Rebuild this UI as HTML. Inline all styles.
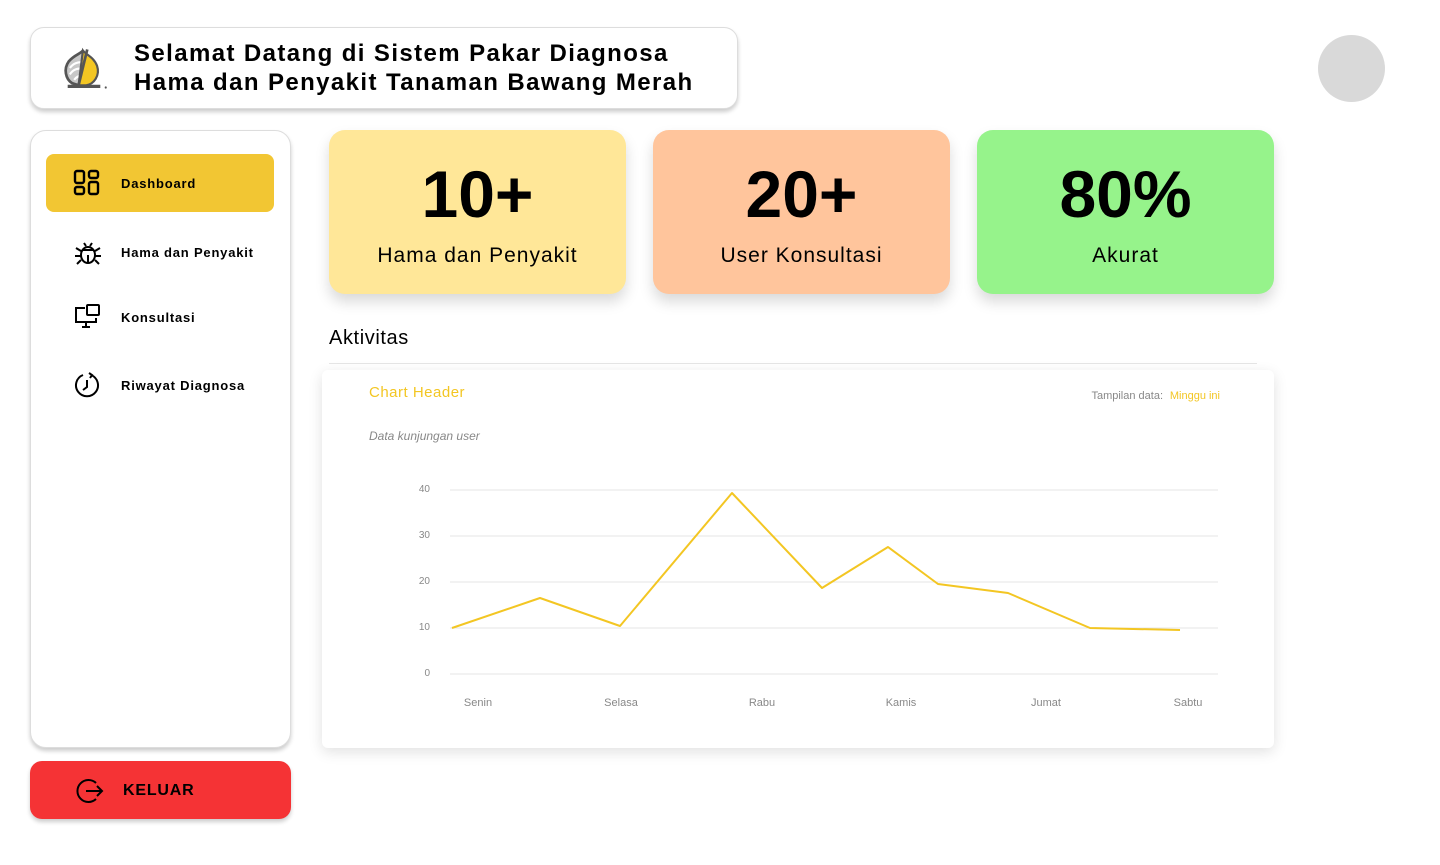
<!DOCTYPE html>
<html><head><meta charset="utf-8"><style>
*{box-sizing:border-box;margin:0;padding:0}
body{width:1440px;height:865px;background:#fff;font-family:"Liberation Sans",sans-serif;position:relative;overflow:hidden;color:#000}
.abs{position:absolute}
.header{left:30px;top:27px;width:708px;height:82px;border:1px solid #ddd;border-radius:14px;box-shadow:0 3px 4px rgba(0,0,0,.2);background:#fff}
.header h1{position:absolute;left:103px;top:11px;font-size:24px;line-height:29px;font-weight:bold;letter-spacing:1.4px;white-space:nowrap}
.side{left:30px;top:130px;width:261px;height:618px;border:1px solid #ddd;border-radius:16px;box-shadow:0 3px 4px rgba(0,0,0,.2);background:#fff}
.nav{position:absolute;left:15px;width:228px;height:58px;border-radius:8px;font-size:13px;font-weight:bold;display:flex;align-items:center;letter-spacing:.8px}
.nav svg{position:absolute;left:27px}
.nav span{position:absolute;left:75px}
.card{top:130px;width:297px;height:164px;border-radius:16px;box-shadow:0 8px 14px rgba(0,0,0,.15);text-align:center}
.card b{display:block;font-size:66px;margin-top:26px;line-height:76px}
.card span{display:block;font-size:21px;margin-top:12px;letter-spacing:1px}
.chart{left:322px;top:370px;width:952px;height:378px;background:#fff;border-radius:6px;box-shadow:0 4px 14px rgba(0,0,0,.12)}
.out{left:30px;top:761px;width:261px;height:58px;background:#f53335;border-radius:12px;box-shadow:0 3px 4px rgba(0,0,0,.2);font-weight:bold;font-size:16px;letter-spacing:.8px}
</style></head><body>
<div class="abs header">
<svg class="abs" style="left:28px;top:16px" width="50" height="50" viewBox="0 0 46 46">
<path d="M22 6c-2 3-8 4-13 10-5 7-3 16 3 20l6 2" fill="#c8c8c8" stroke="#555" stroke-width="2.5"/>
<path d="M10 22c3-4 8-6 12-5M10 28c3-5 8-6 12-5M14 33c2-3 5-4 8-4" fill="none" stroke="#fff" stroke-width="2"/>
<path d="M22 6c3 4 10 6 13 14 3 9-3 17-10 18l-7 0z" fill="#f3c623" stroke="#555" stroke-width="2"/>
<path d="M26 5l-8 33" stroke="#555" stroke-width="2.5"/>
<path d="M8 39h30" stroke="#555" stroke-width="3"/><circle cx="43" cy="40" r="1" fill="#555"/>
</svg>
<h1>Selamat Datang di Sistem Pakar Diagnosa<br>Hama dan Penyakit Tanaman Bawang Merah</h1>
</div>
<div class="abs" style="left:1318px;top:35px;width:67px;height:67px;border-radius:50%;background:#d9d9d9"></div>
<div class="abs side">
<div class="nav" style="top:23px;background:#f2c633">
<svg width="28" height="28" viewBox="0 0 28 28" fill="none" stroke="#000" stroke-width="2.4"><rect x="2" y="2" width="9" height="12" rx="2"/><rect x="16" y="2" width="9" height="7" rx="2"/><rect x="2" y="18" width="9" height="7" rx="2"/><rect x="16" y="13" width="9" height="12" rx="2"/></svg>
<span>Dashboard</span></div>
<div class="nav" style="top:92px">
<svg width="30" height="28" viewBox="0 0 30 28" fill="none" stroke="#000" stroke-width="2"><ellipse cx="15" cy="17" rx="7" ry="8"/><path d="M9 12h12M15 17v8M11 5l2 3M19 5l-2 3M3 10l5 3M27 10l-5 3M2 18h6M28 18h-6M4 26l4-4M26 26l-4-4"/></svg>
<span>Hama dan Penyakit</span></div>
<div class="nav" style="top:157px">
<svg width="30" height="28" viewBox="0 0 30 28" fill="none" stroke="#000" stroke-width="2"><path d="M12 5H3v14h20v-4M9 24h8M13 19v5"/><rect x="14" y="2" width="12" height="10" rx="1"/></svg>
<span>Konsultasi</span></div>
<div class="nav" style="top:225px">
<svg width="28" height="28" viewBox="0 0 28 28" fill="none" stroke="#000" stroke-width="2"><path d="M18 4a11 11 0 1 1-8 0"/><path d="M14 9v7l-4 3M16 2l3 2-2 3"/></svg>
<span>Riwayat Diagnosa</span></div>
</div>
<div class="abs card" style="left:329px;background:#ffe798"><b>10+</b><span>Hama dan Penyakit</span></div>
<div class="abs card" style="left:653px;background:#ffc59c"><b>20+</b><span>User Konsultasi</span></div>
<div class="abs card" style="left:977px;background:#96f38b"><b>80%</b><span>Akurat</span></div>
<div class="abs" style="left:329px;top:327px;font-size:20px;letter-spacing:.6px">Aktivitas</div>
<div class="abs" style="left:329px;top:363px;width:928px;height:1px;background:#e6e6e6"></div>
<div class="abs chart"></div>
<svg class="abs" style="left:0;top:0" width="1440" height="865">
<text x="369" y="397" font-size="15" fill="#f3c623" font-family="Liberation Sans" letter-spacing=".5">Chart Header</text>
<text x="1163" y="399" font-size="11" fill="#888" text-anchor="end" font-family="Liberation Sans">Tampilan data: </text>
<text x="1220" y="399" font-size="11" fill="#f3c623" text-anchor="end" font-family="Liberation Sans">Minggu ini</text>
<text x="369" y="440" font-size="12" fill="#888" font-style="italic" font-family="Liberation Sans">Data kunjungan user</text>
<g stroke="#e6e6e6" stroke-width="1"><path d="M450 490H1218M450 536H1218M450 582H1218M450 628H1218M450 674H1218"/></g>
<g font-size="10" fill="#888" text-anchor="end" font-family="Liberation Sans"><text x="430" y="492">40</text><text x="430" y="538">30</text><text x="430" y="584">20</text><text x="430" y="630">10</text><text x="430" y="676">0</text></g>
<g font-size="11" fill="#888" text-anchor="middle" font-family="Liberation Sans"><text x="478" y="706">Senin</text><text x="621" y="706">Selasa</text><text x="762" y="706">Rabu</text><text x="901" y="706">Kamis</text><text x="1046" y="706">Jumat</text><text x="1188" y="706">Sabtu</text></g>
<polyline points="452,628 540,598 620,626 732,493 822,588 888,547 938,584 1008,593 1090,628 1180,630" fill="none" stroke="#f3c623" stroke-width="2" stroke-linejoin="round"/>
</svg>
<div class="abs out">
<svg class="abs" style="left:46px;top:16px" width="28" height="28" viewBox="0 0 28 28" fill="none" stroke="#000" stroke-width="2"><path d="M20 6A11 11 0 1 0 20 22"/><path d="M10 14h16M21 9l5 5-5 5"/></svg>
<span class="abs" style="left:93px;top:21px">KELUAR</span></div>
</body></html>
